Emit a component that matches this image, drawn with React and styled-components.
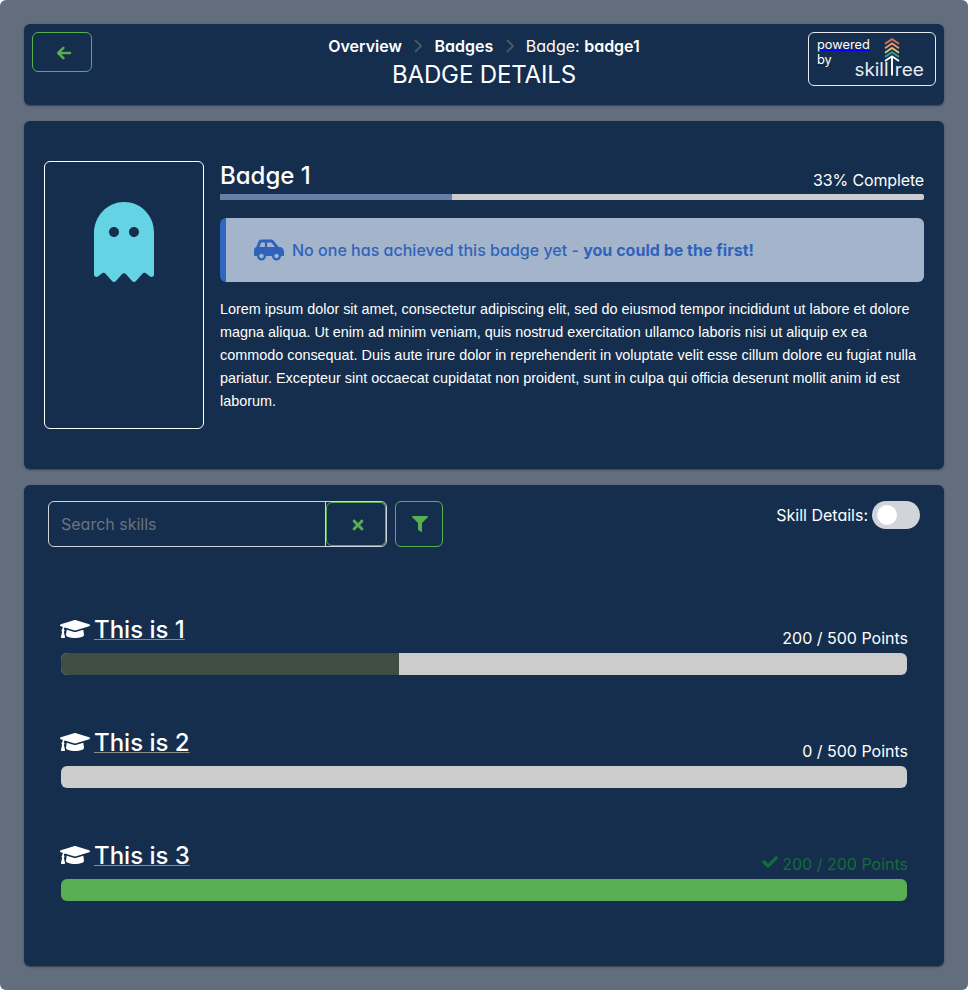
import React from "react";
import styled, { createGlobalStyle } from "styled-components";
import { FaTimes, FaFilter, FaCheck, FaGraduationCap, FaGhost, FaCarSide } from "react-icons/fa";

const Global = createGlobalStyle`
  *, *::before, *::after { box-sizing: border-box; }
  body {
    margin: 0;
    background: #fff;
    color: #fff;
    font: 400 16px/24px Inter, "Liberation Sans", sans-serif;
    font-feature-settings: "cv02", "cv03", "cv04", "cv11";
  }
  button, input { font: inherit; color: inherit; font-feature-settings: inherit; }
`;

const Page = styled.main`
  display: flex;
  flex-direction: column;
  gap: 16px;
  height: 990px;
  padding: 24px;
  border-radius: 6px;
  background: #626d7d;
`;

const Panel = styled.section`
  height: ${(p) => p.$height}px;
  padding: ${(p) => p.$pad};
  border-radius: 6px;
  background: #152e4d;
  box-shadow: 0 1px 3px rgba(0, 0, 0, 0.2), 0 1px 1px rgba(0, 0, 0, 0.25);
`;

const HeaderGrid = styled.div`
  display: grid;
  grid-template-columns: 128px 1fr 128px;
  align-items: start;
`;

const OutlineButton = styled.button`
  display: flex;
  align-items: center;
  justify-content: center;
  width: ${(p) => p.$w}px;
  height: ${(p) => p.$h}px;
  padding: ${(p) => p.$pad || "0"};
  border: 1px solid #59ad52;
  border-radius: 6px;
  background: transparent;
  color: #59ad52;
`;

const BackArrow = styled.svg`
  width: 16px;
  height: 16px;
  fill: none;
  stroke: currentColor;
  stroke-width: 2.5;
  stroke-linecap: round;
  stroke-linejoin: round;
`;

const HeaderText = styled.div`
  display: flex;
  flex-direction: column;
  align-items: center;
  padding-top: 2px;
`;

const Crumbs = styled.nav`
  display: flex;
  align-items: center;
  height: 24px;
  white-space: nowrap;
  b { font-weight: 600; }
`;

const Separator = styled.svg`
  width: 8px;
  height: 14px;
  margin: 0 12.3px;
  fill: none;
  stroke: #4b5563;
  stroke-width: 2;
`;

const Title = styled.h1`
  margin: 1px 0 0;
  font-size: 24px;
  font-weight: 400;
  letter-spacing: -0.13px;
  line-height: 32px;
`;

const PoweredBy = styled.a`
  display: flex;
  width: 128px;
  height: 54px;
  padding: 4px 8px;
  border: 1px solid #e6eaf0;
  border-radius: 6px;
  color: #00f;
`;

const PoweredText = styled.span`
  display: flex;
  flex-direction: column;
  align-items: flex-start;
  width: 38px;
  font-size: 12.8px;
  line-height: 15px;
`;

const PoweredWord = styled.span`
  color: #fff;
  text-decoration: underline #00f;
  text-decoration-thickness: 1px;
  text-underline-offset: 1px;
`;

const Logo = styled.svg`
  width: 72px;
  height: 42px;
  flex: none;
`;

const BadgeRow = styled.div`
  display: flex;
  gap: 16px;
`;

const BadgeIcon = styled.div`
  display: flex;
  justify-content: center;
  width: 160px;
  height: 268px;
  padding-top: 40px;
  border: 1px solid #fff;
  border-radius: 6px;
  color: #64d3e4;
`;

const BadgeBody = styled.div`
  flex: 1;
  min-width: 0;
`;

const SplitRow = styled.div`
  display: flex;
  align-items: flex-end;
  justify-content: space-between;
  height: ${(p) => p.$height}px;
`;

const Heading = styled.h2`
  display: flex;
  align-items: center;
  gap: 4px;
  margin: 0 0 ${(p) => p.$lift}px;
  font-size: 24px;
  font-weight: 500;
  line-height: 28px;
`;

const CapIcon = styled(FaGraduationCap)`
  width: 30px;
  height: 24px;
  margin-bottom: 2px;
`;

const CarIcon = styled(FaCarSide)`
  width: 30px;
  height: 24px;
`;

const DoneIcon = styled(FaCheck)`
  width: 16px;
  height: 16px;
  margin-bottom: 4px;
`;

const Track = styled.div`
  height: ${(p) => p.$height}px;
  margin: ${(p) => p.$margin || "0"};
  border-radius: ${(p) => p.$radius}px;
  background: #ccc;
  overflow: hidden;
`;

const Fill = styled.div`
  height: 100%;
  background: ${(p) => p.$color};
`;

const Notice = styled.div`
  display: flex;
  align-items: center;
  gap: 8px;
  height: 64px;
  margin-top: 18px;
  padding-left: 28px;
  border-left: 6px solid #2f66bf;
  border-radius: 6px;
  background: #a4b4cb;
  color: #2f63bb;
  font-weight: 500;
  letter-spacing: 0.015px;
  b { font-weight: 700; }
`;

const Description = styled.p`
  margin: 16px 0 0;
  font: 400 14.4px/23px "Liberation Sans", Arial, sans-serif;
`;

const Toolbar = styled.div`
  display: flex;
  align-items: flex-start;
  height: 46px;
`;

const SearchGroup = styled.div`
  display: flex;
  width: 339px;
  height: 46px;
  margin-right: 8px;
  border: 1px solid #d1d5db;
  border-radius: 6px;
`;

const SearchInput = styled.input`
  width: 277px;
  padding: 0 12px;
  border: 0;
  border-right: 1px solid #d1d5db;
  background: transparent;
  outline: 0;
  &::placeholder { color: #6b7280; opacity: 1; }
`;

const ToggleLabel = styled.label`
  display: flex;
  align-items: center;
  gap: 4px;
  height: 28px;
  margin-left: auto;
`;

const Toggle = styled.span`
  width: 48px;
  height: 28px;
  padding: 4px 5px;
  border-radius: 14px;
  background: #d1d5db;
  &::before {
    content: "";
    display: block;
    width: 20px;
    height: 20px;
    border-radius: 50%;
    background: #fff;
  }
`;

const SkillList = styled.div`
  display: flex;
  flex-direction: column;
  gap: 53px;
  padding: 68px 12px 0;
`;

const SkillName = styled.a`
  text-decoration: underline;
  text-decoration-color: #8b8b88;
  text-decoration-thickness: 1px;
  text-underline-offset: 1px;
  text-decoration-skip-ink: none;
`;

const Points = styled.span`
  display: flex;
  align-items: center;
  gap: 4px;
  color: ${(p) => (p.$done ? "#146c37" : "#fff")};
  letter-spacing: ${(p) => p.$tracking || 0}px;
  line-height: 24px;
`;

const skills = [
  { name: "This is 1", points: 200, total: 500, color: "#3e4e43" },
  { name: "This is 2", points: 0, total: 500, color: "#3e4e43" },
  { name: "This is 3", points: 200, total: 200, color: "#59ad52" },
];

const Crumb = () => (
  <Separator viewBox="0 0 8 14"><path d="M1 1l6 6-6 6" /></Separator>
);

function SkillTreeLogo() {
  return (
    <Logo viewBox="0 0 72 42">
      <g fill="none" strokeWidth="1.9">
        <path d="M30 6.8l7-4.7 7 4.7" stroke="#d9705a" />
        <path d="M30 11.2l7-4.7 7 4.7" stroke="#eb9a60" />
        <path d="M30 15.7l7-4.7 7 4.7" stroke="#e6c067" />
        <path d="M30 19.9l7-4.7 7 4.7" stroke="#2a9d8f" />
        <path d="M30 24l7-4.7 7 4.7M37 19.5v19" stroke="#fff" />
      </g>
      <g fill="#e9edf2" fontFamily="Inter, sans-serif" fontSize="18" fontWeight="400">
        <text x="-0.5" y="38.5" textLength="34" lengthAdjust="spacingAndGlyphs">skill</text>
        <text x="39.8" y="38.5" textLength="29" lengthAdjust="spacingAndGlyphs">ree</text>
      </g>
    </Logo>
  );
}

function Skill({ name, points, total, color }) {
  const done = points === total;
  return (
    <div>
      <SplitRow $height={35}>
        <Heading $lift={6}>
          <CapIcon />
          <SkillName>{name}</SkillName>
        </Heading>
        <Points $done={done}>
          {done && <DoneIcon />}
          <span>{points} / {total} Points</span>
        </Points>
      </SplitRow>
      <Track $height={22} $radius={6} $margin="3px 1px 0">
        <Fill $color={color} style={{ width: `${(points / total) * 100}%` }} />
      </Track>
    </div>
  );
}

export default function App() {
  return (
    <>
      <Global />
      <Page>
        <Panel $height={81} $pad="8px">
          <HeaderGrid>
            <OutlineButton $w={60} $h={40} $pad="1px 0 0 4px">
              <BackArrow viewBox="0 0 16 16"><path d="M14 8H2.4M7.4 2.8L2.2 8l5.2 5.2" /></BackArrow>
            </OutlineButton>
            <HeaderText>
              <Crumbs>
                <b>Overview</b><Crumb /><b>Badges</b><Crumb />
                <span>Badge: <b>badge1</b></span>
              </Crumbs>
              <Title>BADGE DETAILS</Title>
            </HeaderText>
            <PoweredBy>
              <PoweredText>
                <PoweredWord>powered</PoweredWord>
                <PoweredWord>by</PoweredWord>
              </PoweredText>
              <SkillTreeLogo />
            </PoweredBy>
          </HeaderGrid>
        </Panel>

        <Panel $height={348} $pad="40px 20px">
          <BadgeRow>
            <BadgeIcon><FaGhost size={80} /></BadgeIcon>
            <BadgeBody>
              <SplitRow $height={31}>
                <Heading $lift={2}>Badge 1</Heading>
                <Points $tracking={-0.15}>33% Complete</Points>
              </SplitRow>
              <Track $height={6} $radius={2} $margin="2px 0 0">
                <Fill $color="#667fa8" style={{ width: "33%" }} />
              </Track>
              <Notice>
                <CarIcon />
                <span>No one has achieved this badge yet - <b>you could be the first!</b></span>
              </Notice>
              <Description>
                Lorem ipsum dolor sit amet, consectetur adipiscing elit, sed do eiusmod tempor incididunt ut labore et dolore magna aliqua. Ut enim ad minim veniam, quis nostrud exercitation ullamco laboris nisi ut aliquip ex ea commodo consequat. Duis aute irure dolor in reprehenderit in voluptate velit esse cillum dolore eu fugiat nulla pariatur. Excepteur sint occaecat cupidatat non proident, sunt in culpa qui officia deserunt mollit anim id est laborum.
              </Description>
            </BadgeBody>
          </BadgeRow>
        </Panel>

        <Panel $height={481} $pad="16px 24px">
          <Toolbar>
            <SearchGroup>
              <SearchInput placeholder="Search skills" />
              <OutlineButton $w={60} $h={44} $pad="2px 0 0 4px"><FaTimes size={16} /></OutlineButton>
            </SearchGroup>
            <OutlineButton $w={48} $h={46} $pad="0 0 0 1px"><FaFilter size={16} /></OutlineButton>
            <ToggleLabel>Skill Details: <Toggle /></ToggleLabel>
          </Toolbar>
          <SkillList>
            {skills.map((s) => <Skill key={s.name} {...s} />)}
          </SkillList>
        </Panel>
      </Page>
    </>
  );
}
